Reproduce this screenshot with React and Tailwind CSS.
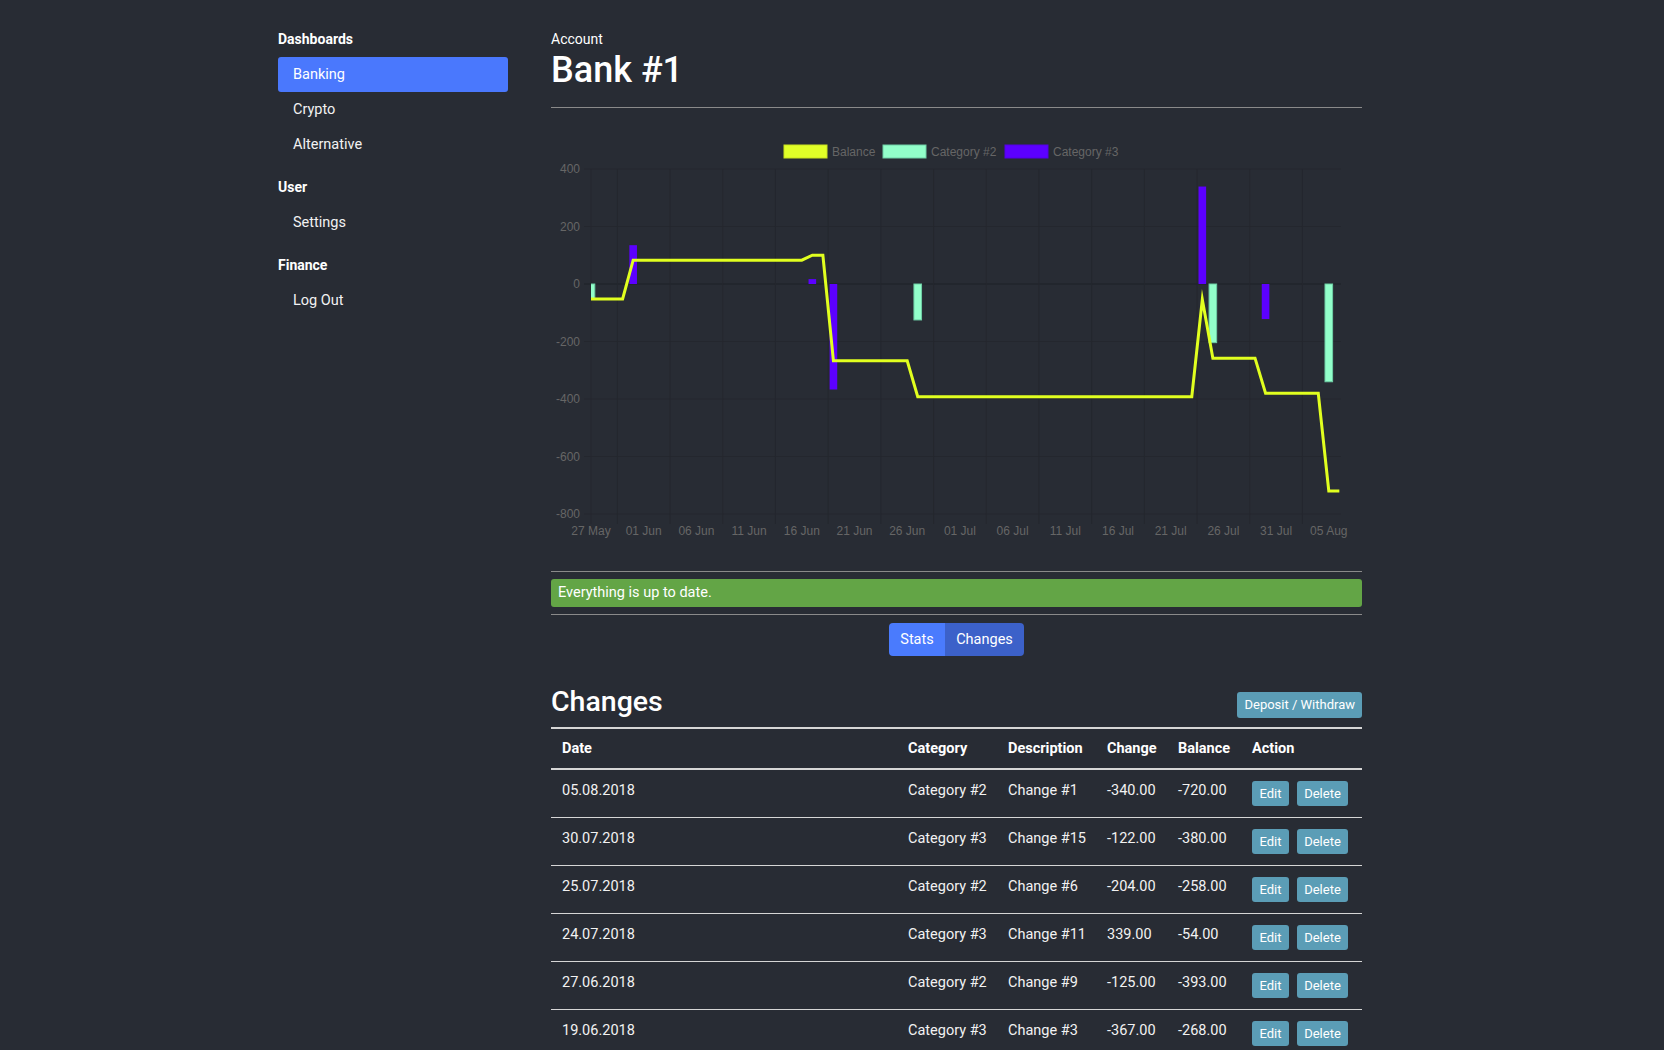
import React from 'react';

const sidebar = [
  { title: 'Dashboards', items: ['Banking', 'Crypto', 'Alternative'] },
  { title: 'User', items: ['Settings'] },
  { title: 'Finance', items: ['Log Out'] },
];

const changes = [
  { date: '05.08.2018', category: 'Category #2', description: 'Change #1', change: '-340.00', balance: '-720.00' },
  { date: '30.07.2018', category: 'Category #3', description: 'Change #15', change: '-122.00', balance: '-380.00' },
  { date: '25.07.2018', category: 'Category #2', description: 'Change #6', change: '-204.00', balance: '-258.00' },
  { date: '24.07.2018', category: 'Category #3', description: 'Change #11', change: '339.00', balance: '-54.00' },
  { date: '27.06.2018', category: 'Category #2', description: 'Change #9', change: '-125.00', balance: '-393.00' },
  { date: '19.06.2018', category: 'Category #3', description: 'Change #3', change: '-367.00', balance: '-268.00' },
  { date: '17.06.2018', category: 'Category #3', description: 'Change #7', change: '17.00', balance: '99.00' },
  { date: '31.05.2018', category: 'Category #3', description: 'Change #4', change: '135.00', balance: '82.00' },
];

// chart data, day offset from 27 May
const balance = [
  [0, -52], [3, -52], [4, 83], [20, 83], [21, 100], [22, 100], [23, -267], [30, -267],
  [31, -392], [57, -392], [58, -54], [59, -258], [63, -258], [64, -380], [69, -380], [70, -720], [71, -720],
];
const bars = [
  { d: 0, v: -52, cat: 2 },
  { d: 4, v: 135, cat: 3 },
  { d: 21, v: 17, cat: 3 },
  { d: 23, v: -367, cat: 3 },
  { d: 31, v: -125, cat: 2 },
  { d: 58, v: 339, cat: 3 },
  { d: 59, v: -204, cat: 2 },
  { d: 64, v: -122, cat: 3 },
  { d: 70, v: -340, cat: 2 },
];
const xLabels = ['27 May', '01 Jun', '06 Jun', '11 Jun', '16 Jun', '21 Jun', '26 Jun', '01 Jul', '06 Jul', '11 Jul', '16 Jul', '21 Jul', '26 Jul', '31 Jul', '05 Aug'];
const yTicks = [400, 200, 0, -200, -400, -600, -800];

const X = (d) => 40 + d * 10.54;
const Y = (v) => 176 - v * 0.2875;

function BalanceChart() {
  const font = { fontFamily: '"Liberation Sans", Arial, sans-serif', fontSize: 12 };
  const vGrid = [];
  for (let k = 0; k < 14; k++) vGrid.push(X(2.5 + k * 5));

  return (
    <svg width="811" height="455" className="block">
      <defs>
        <clipPath id="plot">
          <rect x="40" y="40" width="750" height="380" />
        </clipPath>
      </defs>

      {/* legend */}
      <rect x="233" y="37" width="43" height="13" fill="#e1ff28" stroke="#c9e31f" />
      <text x="281" y="48" fill="#666" style={font}>Balance</text>
      <rect x="332" y="37" width="43" height="13" fill="#92ffca" stroke="#6fcfa6" />
      <text x="380" y="48" fill="#666" style={font}>Category #2</text>
      <rect x="454" y="37" width="43" height="13" fill="#5c00ff" stroke="#5200e6" />
      <text x="502" y="48" fill="#666" style={font}>Category #3</text>

      {/* grid */}
      {yTicks.map((v) => (
        <g key={v}>
          <line x1="33" x2="790" y1={Y(v)} y2={Y(v)} stroke={v === 0 ? '#1d2026' : '#24272e'} strokeWidth="1" />
          <text x="29" y={Y(v) + 4} textAnchor="end" fill="#666" style={font}>{v}</text>
        </g>
      ))}
      <line x1="40" x2="40" y1="61" y2="416" stroke="#24272e" />
      {vGrid.map((x, i) => (
        <line key={i} x1={x} x2={x} y1="61" y2="416" stroke="#24272e" />
      ))}
      {xLabels.map((l, i) => (
        <text key={l} x={X(i * 5)} y="427" textAnchor="middle" fill="#666" style={font}>{l}</text>
      ))}

      {/* bars */}
      <g clipPath="url(#plot)">
        {bars.map((b, i) => {
          const y0 = Y(0);
          const y1 = Y(b.v);
          return (
            <rect
              key={i}
              x={X(b.d) - 3.8}
              y={Math.min(y0, y1)}
              width="7.6"
              height={Math.abs(y1 - y0)}
              fill={b.cat === 2 ? '#92ffca' : '#5c00ff'}
              stroke={b.cat === 2 ? '#6fcfa6' : 'none'}
              strokeWidth="1"
            />
          );
        })}
        <polyline
          points={balance.map(([d, v]) => `${X(d)},${Y(v)}`).join(' ')}
          fill="none"
          stroke="#e1ff1f"
          strokeWidth="3"
          strokeMiterlimit="10"
        />
      </g>
    </svg>
  );
}

function App() {
  return (
    <div className="min-h-screen bg-[#282c34] text-[#f2f2f2] font-['Roboto',sans-serif]">
      <div className="flex pl-[278px] pt-[29px]">
        {/* Sidebar */}
        <div className="w-[230px] flex-shrink-0">
          {sidebar.map((section) => (
            <div key={section.title} className="mb-[15px]">
              <div className="text-[14px] leading-5 font-bold text-white mb-2">{section.title}</div>
              {section.items.map((item) => (
                <div
                  key={item}
                  className={
                    'h-[35px] flex items-center px-[15px] pt-px text-[14.5px] leading-5 rounded-[3px] ' +
                    (item === 'Banking' ? 'bg-[#4a78fd] text-white' : 'text-[#f2f2f2]')
                  }
                >
                  {item}
                </div>
              ))}
            </div>
          ))}
        </div>

        {/* Main */}
        <div className="ml-[43px] w-[811px] flex-shrink-0">
          <div className="text-[14px] leading-5 text-white">Account</div>
          <h1 className="text-[36px] leading-[42px] font-medium text-white">Bank #1</h1>
          <div className="mt-4 border-t border-[#8a8a8a]" />

          <BalanceChart />

          <div className="mt-[8px] border-t border-[#8a8a8a]" />
          <div className="mt-[7px] h-[28px] rounded-[3px] bg-[#63a546] text-white text-[14.5px] leading-[28px] pl-[7px]">
            Everything is up to date.
          </div>
          <div className="mt-[7px] border-t border-[#8a8a8a]" />

          <div className="mt-[8px] flex justify-center">
            <div className="flex h-[33px] rounded-[4px] overflow-hidden text-[14.5px] text-white">
              <button className="w-[56px] bg-[#4a7bfd]">Stats</button>
              <button className="w-[79px] bg-[#3c61c9]">Changes</button>
            </div>
          </div>

          <div className="mt-[30px] flex justify-between items-end">
            <h2 className="text-[28.5px] leading-[32px] font-medium text-white">Changes</h2>
            <button className="h-[26px] px-[7px] rounded-[3px] bg-[#5b9db6] text-white text-[13px]">
              Deposit / Withdraw
            </button>
          </div>

          <table className="mt-[9px] w-full table-fixed border-t-2 border-[#d6d6d6] text-left">
            <colgroup>
              <col className="w-[346px]" />
              <col className="w-[100px]" />
              <col className="w-[99px]" />
              <col className="w-[71px]" />
              <col className="w-[74px]" />
              <col className="w-[121px]" />
            </colgroup>
            <thead>
              <tr className="border-b-2 border-[#d6d6d6] text-[14.5px] font-bold text-white">
                <th className="px-[11px] py-[10px] leading-[19px]">Date</th>
                <th className="px-[11px] py-[10px] leading-[19px]">Category</th>
                <th className="px-[11px] py-[10px] leading-[19px]">Description</th>
                <th className="px-[11px] py-[10px] leading-[19px]">Change</th>
                <th className="px-[11px] py-[10px] leading-[19px]">Balance</th>
                <th className="px-[11px] py-[10px] leading-[19px]">Action</th>
              </tr>
            </thead>
            <tbody>
              {changes.map((row, i) => (
                <tr key={row.date} className={i > 0 ? 'border-t border-[#d6d6d6]' : ''}>
                  <td className="px-[11px] py-[11px] align-top text-[14.5px] leading-5 whitespace-nowrap">{row.date}</td>
                  <td className="px-[11px] py-[11px] align-top text-[14.5px] leading-5 whitespace-nowrap">{row.category}</td>
                  <td className="px-[11px] py-[11px] align-top text-[14.5px] leading-5 whitespace-nowrap">{row.description}</td>
                  <td className="px-[11px] py-[11px] align-top text-[14.5px] leading-5 whitespace-nowrap">{row.change}</td>
                  <td className="px-[11px] py-[11px] align-top text-[14.5px] leading-5 whitespace-nowrap">{row.balance}</td>
                  <td className="px-[11px] py-[11px] align-top">
                    <div className="flex gap-2">
                      <button className="h-[25px] w-[37px] rounded-[3px] bg-[#5b9db6] text-white text-[13px]">Edit</button>
                      <button className="h-[25px] w-[51px] rounded-[3px] bg-[#5b9db6] text-white text-[13px]">Delete</button>
                    </div>
                  </td>
                </tr>
              ))}
            </tbody>
          </table>
        </div>
      </div>
    </div>
  );
}

export default App;
